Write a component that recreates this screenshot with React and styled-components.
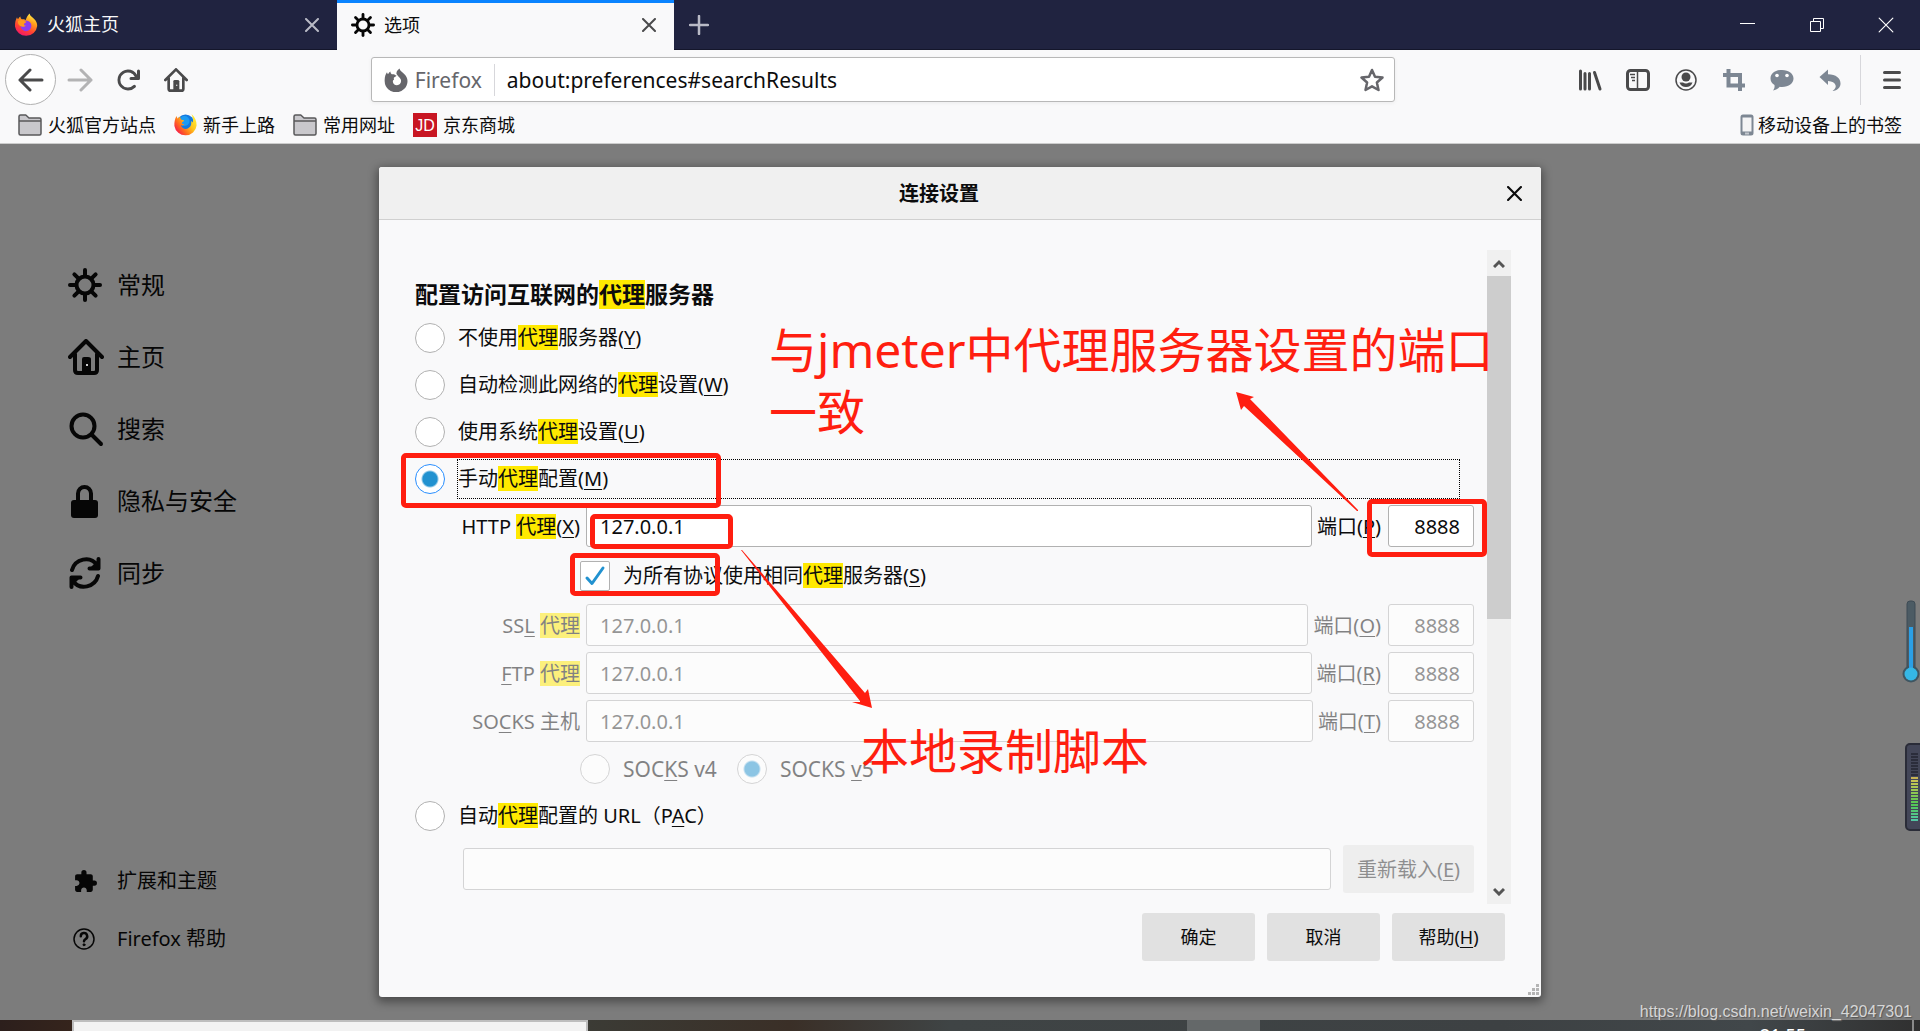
import { useState } from "react";
import styled, { createGlobalStyle, css } from "styled-components";
import { MdExtension } from "react-icons/md";

const GlobalStyle = createGlobalStyle`
  *,
  *::before,
  *::after {
    box-sizing: border-box;
  }

  body {
    margin: 0;
    overflow: hidden;
    font-family: "Noto Sans", "Noto Sans CJK SC", sans-serif;
    font-size: 20px;
    color: #0c0c0d;
  }

  button,
  input {
    margin: 0;
    font: inherit;
    color: inherit;
  }

  button {
    padding: 0;
    border: none;
    background: none;
  }

  a {
    color: inherit;
    text-decoration: none;
  }

  svg {
    display: block;
    flex-shrink: 0;
  }
`;

const Page = styled.div`
  display: flex;
  flex-direction: column;
  height: 100vh;
`;

/* ---------- tab strip ---------- */

const TabStrip = styled.header`
  display: flex;
  height: 50px;
  background: #202340;
  border-bottom: 1px solid #14162b;
  color: #f9f9fa;
`;

const Tab = styled.div`
  display: flex;
  align-items: center;
  gap: 9px;
  width: 337px;
  padding: 0 18px 0 14px;
  height: 49px;
  font-size: 18px;
  line-height: 24px;
  color: #f9f9fa;

  ${({ $active }) =>
    $active &&
    css`
      height: 50px;
      color: #0c0c0d;
      background: #f9f9fa;
      box-shadow: inset 0 3px 0 #0a84ff;
    `}
`;

const TabTitle = styled.span`
  flex: 1;
  padding-bottom: 1px;
`;

const NewTab = styled.button`
  display: grid;
  place-items: center;
  width: 50px;
`;

const WindowButtons = styled.div`
  display: flex;
  margin-left: auto;
`;

const WindowButton = styled.button`
  display: grid;
  place-items: center;
  width: 69px;
`;

/* ---------- toolbars ---------- */

const Toolbar = styled.nav`
  display: flex;
  align-items: center;
  height: 59px;
  padding: 0 4px 0 5px;
  background: #f9f9fa;
  color: #4a4a4b;
`;

const BackButton = styled.button`
  display: grid;
  place-items: center;
  width: 51px;
  height: 51px;
  border: 1px solid #b1b1b1;
  border-radius: 50%;
  background: #fff;
`;

const ToolButton = styled.button`
  display: grid;
  place-items: center;
  width: 48px;
  height: 48px;
  color: ${({ $tone }) => $tone || "inherit"};
`;

const Spacer = styled.div`
  flex: 1 1 4px;
`;

const UrlBar = styled.div`
  display: flex;
  align-items: center;
  flex: 6;
  height: 45px;
  padding: 0 10px 0 12px;
  border: 1px solid #b8b8b8;
  border-radius: 3px;
  background: #fff;
  box-shadow: 0 1px 4px rgba(0, 0, 0, 0.06);
  font-size: 21px;
`;

const Identity = styled.span`
  display: flex;
  align-items: center;
  gap: 7px;
  height: 32px;
  padding-right: 12px;
  border-right: 1px solid #d7d7db;
  color: #66666b;
`;

const UrlInput = styled.input`
  flex: 1;
  min-width: 0;
  padding: 0 12px;
  border: none;
  outline: none;
  background: none;
  color: #0c0c0d;
`;

const Divider = styled.span`
  width: 1px;
  height: 50px;
  margin: 0 7px 0 6px;
  background: #d7d7db;
`;

const Bookmarks = styled.nav`
  display: flex;
  align-items: center;
  gap: 18px;
  height: 35px;
  padding: 0 18px 2px;
  border-bottom: 1px solid #ccc;
  background: #f9f9fa;
  font-size: 18px;
  line-height: 24px;
`;

const Bookmark = styled.a`
  display: flex;
  align-items: center;
  gap: ${({ $last }) => ($last ? "4px" : "6px")};
  margin-left: ${({ $last }) => ($last ? "auto" : "0")};
`;

/* ---------- page body ---------- */

const Main = styled.main`
  position: relative;
  display: grid;
  grid-template: minmax(0, 1fr) / minmax(0, 1fr);
  flex: 1;
  min-height: 0;
  background: #7c7c7c;

  & > aside,
  & > section {
    grid-area: 1 / 1;
  }
`;

const Sidebar = styled.aside`
  display: flex;
  flex-direction: column;
  padding: 105px 0 52px 68px;
  color: #060606;
`;

const Category = styled.a`
  display: grid;
  grid-template-columns: 36px auto;
  align-items: center;
  gap: 13px;
  height: ${({ $small }) => ($small ? "58px" : "72px")};
  font-size: ${({ $small }) => ($small ? "20px" : "24px")};
  line-height: 32px;

  svg {
    justify-self: start;
    margin-left: ${({ $small }) => ($small ? "5px" : "0")};
  }
`;

const SidebarFooter = styled.div`
  margin-top: auto;
`;

/* ---------- dialog ---------- */

const Dialog = styled.section`
  position: relative;
  justify-self: center;
  align-self: start;
  width: 1162px;
  max-width: 100%;
  margin-top: 23px;
  padding-bottom: 36px;
  border-radius: 3px;
  background: #f9f9fa;
  box-shadow: 0 3px 10px 2px rgba(0, 0, 0, 0.4);
`;

const DialogHeader = styled.header`
  display: grid;
  grid-template-columns: 12px 1fr 54px;
  align-items: center;
  height: 53px;
  border-bottom: 1px solid #d0d0d0;
  border-radius: 3px 3px 0 0;
  background: #f0f0f0;
`;

const DialogTitle = styled.h1`
  grid-column: 2;
  margin: 0;
  padding-top: 2px;
  font-size: 20px;
  line-height: 28px;
  text-align: center;
`;

const CloseButton = styled.button`
  display: grid;
  place-items: center;
  height: 40px;
`;

const ScrollBox = styled.div`
  display: flex;
  gap: 13px;
  margin: 30px 30px 0 36px;
`;

const Form = styled.form`
  flex: 1;
  padding: 29px 0 11px;
`;

const Heading = styled.h2`
  margin: 0 0 9px;
  font-size: 23px;
  line-height: 30px;
`;

const Mark = styled.mark`
  display: inline-block;
  background: #ffe900;
  color: inherit;
  line-height: ${({ $large }) => ($large ? "29px" : "25px")};
`;

const Key = styled.u`
  text-decoration-thickness: 1px;
  text-underline-offset: 3px;
`;

const Options = styled.div`
  display: flex;
  flex-direction: column;
  gap: 7px;
`;

const Option = styled.div`
  display: flex;
  align-items: center;
  gap: 12px;
  height: 40px;
  padding-right: 14px;
`;

const OptionLabel = styled.label`
  flex: 1;
  height: 40px;
  border: 1px dotted ${({ $focused }) => ($focused ? "#000" : "transparent")};
  line-height: 38px;
`;

const Radio = styled.input.attrs({ type: "radio" })`
  appearance: none;
  width: 30px;
  height: 30px;
  border: 1px solid #b1b1b1;
  border-radius: 50%;
  background: #fff;

  &:checked {
    border-color: #2a8fff;
    background: radial-gradient(circle, #2292d0 0 7px, #fff 9px);
  }

  &:disabled {
    border-color: #b1b1b1;
    opacity: 0.5;
  }
`;

const Checkbox = styled.input.attrs({ type: "checkbox" })`
  appearance: none;
  width: 30px;
  height: 30px;
  border: 1px solid #b1b1b1;
  border-radius: 2px;
  background: #fff;
`;

const CheckCell = styled.span`
  display: grid;

  & > * {
    grid-area: 1 / 1;
    place-self: center;
  }

  svg {
    pointer-events: none;
  }
`;

const Fields = styled.div`
  display: flex;
  flex-direction: column;
  gap: 6px;
  padding: 6px 0;
`;

const FieldRow = styled.div`
  display: flex;
  align-items: center;
`;

const IndentRow = styled.div`
  display: flex;
  align-items: center;
  gap: 13px;
  height: ${({ $tall }) => ($tall ? "45px" : "42px")};
  padding-left: 165px;
  line-height: 32px;
`;

const FieldLabel = styled.label`
  width: 165px;
  padding-top: 2px;
  text-align: right;
  white-space: nowrap;
  line-height: 32px;
  opacity: ${({ $off }) => ($off ? 0.5 : 1)};
`;

const PortLabel = styled.label`
  margin: 0 7px 0 5px;
  padding-top: 2px;
  line-height: 32px;
  opacity: ${({ $off }) => ($off ? 0.5 : 1)};
`;

const DimLabel = styled.label`
  margin-right: 7px;
  font-size: 21px;
  opacity: 0.5;
`;

const TextInput = styled.input`
  flex: 1;
  min-width: 0;
  height: 42px;
  margin-left: ${({ $flush }) => ($flush ? "0" : "6px")};
  padding: 0 13px;
  border: 1px solid #b1b1b1;
  border-radius: 3px;
  background: #fff;
  outline: none;

  &:disabled {
    opacity: 0.5;
    color: #333;
  }
`;

const PortInput = styled(TextInput)`
  flex: 0 0 86px;
  margin-left: 0;
  text-align: right;
`;

const PacRow = styled.div`
  display: flex;
  align-items: center;
  gap: 12px;
  margin-top: 9px;
  padding-left: 48px;
`;

const Button = styled.button`
  min-width: ${({ $wide }) => ($wide ? "131px" : "113px")};
  height: 48px;
  padding-bottom: 2px;
  border-radius: 3px;
  background: #e1e1e1;
  font-size: ${({ $wide }) => ($wide ? "20px" : "18px")};

  &:disabled {
    opacity: 0.45;
  }
`;

const DialogFooter = styled.footer`
  display: flex;
  justify-content: flex-end;
  gap: 12px;
  margin-top: 9px;
  padding-right: 36px;
`;

const Scrollbar = styled.div`
  display: flex;
  flex-direction: column;
  width: 24px;
  background: #f0f0f0;
`;

const ScrollButton = styled.button`
  display: grid;
  place-items: center;
  height: 26px;
`;

const Thumb = styled.div`
  flex: 343;
  background: #cdcdcd;
`;

const Track = styled.div`
  flex: 259;
`;

const Grip = styled.svg`
  position: absolute;
  right: 2px;
  bottom: 2px;
`;

/* ---------- marks drawn over the dialog ---------- */

const NoteBox = styled.div`
  position: absolute;
  left: ${({ $x }) => $x}px;
  top: ${({ $y }) => $y}px;
  width: ${({ $w }) => $w}px;
  height: ${({ $h }) => $h}px;
  border: 5px solid #ff1e10;
  border-radius: 5px;
  pointer-events: none;
`;

const NoteText = styled.p`
  position: absolute;
  left: ${({ $x }) => $x}px;
  top: ${({ $y }) => $y}px;
  margin: 0;
  color: #ff1e10;
  font-size: 48px;
  line-height: 62px;
  white-space: pre;
  pointer-events: none;
`;

const Arrows = styled.svg`
  position: absolute;
  left: 0;
  top: 0;
  pointer-events: none;
`;

const Gadget = styled.svg`
  position: absolute;
  right: 0;
  top: ${({ $y }) => $y}px;
`;

const Watermark = styled.span`
  position: absolute;
  right: 8px;
  bottom: 0;
  color: #d6d6d6;
  font-family: "Liberation Sans", Arial, sans-serif;
  font-size: 16px;
  line-height: 16px;
  text-shadow: 1px 1px 1px #555;
`;

/* ---------- taskbar ---------- */

const Taskbar = styled.footer`
  display: flex;
  height: 11px;
  overflow: hidden;
  background: linear-gradient(
    90deg,
    #2c1f1c 0,
    #35241c 72px,
    #3b3b35 588px,
    #3a2f27 790px,
    #3f4445 950px,
    #3d4143 1500px,
    #41474a 1750px,
    #303030 100%
  );
`;

const TaskSearch = styled.div`
  flex: 0 0 516px;
  margin-left: 72px;
  border: 2px solid #bdbdbd;
  border-bottom: none;
  background: #f2f2f2;
`;

const TaskItem = styled.div`
  width: 73px;
  margin-left: 599px;
  background: #646869;
`;

const Clock = styled.time`
  margin-left: auto;
  padding-top: 3px;
  color: #fff;
  font-size: 18px;
  line-height: 24px;
`;

const ShowDesktop = styled.span`
  width: 8px;
  margin-left: 106px;
  border-left: 2px solid #8a8a8a;
`;

/* ---------- icons ---------- */

const FirefoxLogo = () => (
  <svg width="24" height="24" viewBox="0 0 24 24">
    <defs>
      <linearGradient id="foxFlame" x1="0.8" y1="0" x2="0.3" y2="1">
        <stop offset="0" stopColor="#fff44f" />
        <stop offset="0.35" stopColor="#ffa11b" />
        <stop offset="0.7" stopColor="#ff4033" />
        <stop offset="1" stopColor="#f5156c" />
      </linearGradient>
    </defs>
    <path
      fill="url(#foxFlame)"
      d="M15.500 0.500c.4 2.400 3.200 4 4.700 5.500 2 2 3 4.400 3 7A11.200 11 0 0 1 1 13.500C.7 9.500 2 6 3 4.200c.3 1 .6 1.500 1 2C4.800 5 5.500 4 6.400 3.500c.1 1.300.6 2.200 1.400 2.800 1.700-.3 3.200.2 3.900.9.8-2.700 2-4.800 3.800-6.700z"
    />
    <circle cx="12" cy="12.800" r="5.400" fill="#8b3df0" />
    <path
      fill="#ff9a1f"
      d="M4 8c2.200-1.500 4.500-1.300 6.500 0l2 .7c-.5 1.300-2.400 1.500-2.600 2.400.2 1.600 1 1.500 2 1.700-1.200 1.200-3 1.200-4.300.7C5 12.500 3.500 11 4 8z"
    />
  </svg>
);

const FirefoxClassic = () => (
  <svg width="23" height="24" viewBox="0 0 23 24">
    <defs>
      <linearGradient id="foxTail" x1="1" y1="0.2" x2="0.1" y2="0.9">
        <stop offset="0" stopColor="#fff13a" />
        <stop offset="0.4" stopColor="#ffc21a" />
        <stop offset="0.7" stopColor="#ff6a1f" />
        <stop offset="1" stopColor="#f5134f" />
      </linearGradient>
    </defs>
    <circle cx="11.500" cy="10.500" r="9" fill="#1479e0" />
    <circle cx="10.500" cy="8" r="5" fill="#1c9bf2" />
    <path
      fill="url(#foxTail)"
      d="M17.500 1c3.500 3 5.200 7 5.100 11.500A11.200 11 0 0 1 .4 13C.2 9 .8 6 2.500 3l1 2.500L6.200 3.500c0 1.500.5 2.500 1.300 3.300 1 .3 2 .3 2.600.7-.3 1.200-2 1.500-2.300 2.500 0 1.200 1.700 1.200 2.600 1.400-1.200 1.200-2.500 1.100-3.600.9 1.200 3.500 5 4.600 7.700 2.800 2.600-1.700 3.300-4.500 2.500-7.100l1.800 1.500C19.500 6.500 18.500 3.500 17.500 1z"
    />
  </svg>
);

const FirefoxMono = () => (
  <svg width="24" height="24" viewBox="0 0 24 24" fill="#66666b">
    <path d="M15.500 0.500c.4 2.400 3.200 4 4.700 5.500 2 2 3.300 4.400 3.300 7A11.400 11 0 0 1 .7 13.500C.4 9.500 1.500 6 3 4.200c.3 1 .6 1.500 1 2C4.800 5 5.500 4 6.400 3.500c.1 1.300.6 2.200 1.400 2.800 1.700-.3 3 .2 3.700.9l1 .4c-.4 1.200-2 1.500-2.800 2.400.3 1.300.8 1.200-.7 2.500-.7 2.700 1.500 4.900 4 4.800 3-.2 4.800-3 3.800-5.800-.8-2.200-3.500-3.600-4.300-5.500-.5-2.500 1.400-4.200 3-5.500z" />
  </svg>
);

const Gear = ({ size }) => (
  <svg width={size} height={size} viewBox="0 0 34 34" fill="none" stroke="#060606" strokeLinecap="round">
    <circle cx="17" cy="17" r="8.500" strokeWidth="4" />
    {[0, 45, 90, 135, 180, 225, 270, 315].map((deg) => (
      <path key={deg} d="M17 7V2" strokeWidth="4" transform={`rotate(${deg} 17 17)`} />
    ))}
  </svg>
);

const House = ({ size, color }) => (
  <svg width={size} height={size} viewBox="0 0 36 36" fill="none" stroke={color} strokeWidth="4" strokeLinecap="round" strokeLinejoin="round">
    <path d="M2 18 18 2l16 16M7 15v16q0 3 3 3h16q3 0 3-3V15" />
    <path fill={color} stroke="none" d="M14 20q0-2 2-2h4q3 0 3 2v14h-9z" />
    <rect x="18" y="25" width="2" height="2" fill="#ccc" stroke="none" />
  </svg>
);

const Cross = ({ size, color, width = 2 }) => (
  <svg width={size} height={size} viewBox="0 0 14 14" stroke={color} strokeWidth={width} strokeLinecap="round">
    <path d="M1 1l12 12M13 1L1 13" />
  </svg>
);

const Arrow = ({ flip, color }) => (
  <svg width="26" height="24" viewBox="0 0 26 24" fill="none" stroke={color} strokeWidth="3" strokeLinecap="round" strokeLinejoin="round">
    <path d={flip ? "M2 12h22M14 2l10 10-10 10" : "M24 12H2M12 2 2 12l10 10"} />
  </svg>
);

const Folder = () => (
  <svg width="24" height="22" viewBox="0 0 24 22" fill="#c9c8cc" stroke="#58585a" strokeWidth="1.500" strokeLinejoin="round">
    <path d="M1 2.500Q1 1 2.500 1h5.300L11 4h10.500Q23 4 23 5.500v14q0 1.500-1.500 1.500h-19Q1 21 1 19.500z" />
    <path d="M1 7h22" />
  </svg>
);

const JdLogo = () => (
  <svg width="24" height="24" viewBox="0 0 24 24">
    <rect width="24" height="24" fill="#c81623" />
    <text x="12" y="18" fill="#fff" fontSize="16" fontFamily="Liberation Sans, sans-serif" textAnchor="middle">
      JD
    </text>
  </svg>
);

const categories = [
  { label: "常规", icon: <Gear size={34} /> },
  { label: "主页", icon: <House size={36} color="#060606" /> },
  {
    label: "搜索",
    icon: (
      <svg width="36" height="36" viewBox="0 0 36 36" fill="none" stroke="#060606" strokeWidth="4" strokeLinecap="round">
        <circle cx="15" cy="15" r="11.500" />
        <path d="M24 24l9 9" />
      </svg>
    ),
  },
  {
    label: "隐私与安全",
    icon: (
      <svg width="34" height="34" viewBox="0 0 34 34">
        <path d="M10 17V9.500a6.500 6.500 0 0 1 13 0V17" fill="none" stroke="#060606" strokeWidth="4" />
        <rect x="3" y="16" width="27" height="18" rx="3" fill="#060606" />
      </svg>
    ),
  },
  {
    label: "同步",
    icon: (
      <svg width="34" height="34" viewBox="0 0 34 34" fill="none" stroke="#060606" strokeWidth="4" strokeLinecap="round" strokeLinejoin="round">
        <path d="M4 14C7 3 22-1 29 9" />
        <path d="M30.500 3v9.500H21.500" />
        <path d="M30 20C27 31 12 35 5 25" />
        <path d="M3.500 31v-9.500h9" />
        <path fill="#060606" stroke="none" d="M22 12h8V4zM12 22H4v8z" />
      </svg>
    ),
  },
];

const proxyWord = <Mark>代理</Mark>;

const options = [
  { id: "none", label: <>不使用{proxyWord}服务器(<Key>Y</Key>)</> },
  { id: "detect", label: <>自动检测此网络的{proxyWord}设置(<Key>W</Key>)</> },
  { id: "system", label: <>使用系统{proxyWord}设置(<Key>U</Key>)</> },
  { id: "manual", label: <>手动{proxyWord}配置(<Key>M</Key>)</> },
];

const sameProxies = [
  { id: "ssl", label: <>SS<Key>L</Key> {proxyWord}</>, port: "O" },
  { id: "ftp", label: <><Key>F</Key>TP {proxyWord}</>, port: "R" },
  { id: "socks", label: <>SO<Key>C</Key>KS 主机</>, port: "T" },
];

const ProxyRow = ({ id, label, port, disabled }) => (
  <FieldRow>
    <FieldLabel htmlFor={id} $off={disabled}>
      {label}
    </FieldLabel>
    <TextInput id={id} defaultValue="127.0.0.1" disabled={disabled} />
    <PortLabel htmlFor={`${id}-port`} $off={disabled}>
      端口(<Key>{port}</Key>)
    </PortLabel>
    <PortInput id={`${id}-port`} defaultValue="8888" disabled={disabled} />
  </FieldRow>
);

const BrowserChrome = () => (
  <>
    <TabStrip>
      <Tab>
        <FirefoxLogo />
        <TabTitle>火狐主页</TabTitle>
        <button aria-label="关闭标签页">
          <Cross size={14} color="#b9bac6" />
        </button>
      </Tab>
      <Tab $active>
        <Gear size={24} />
        <TabTitle>选项</TabTitle>
        <button aria-label="关闭标签页">
          <Cross size={14} color="#4a4a4b" />
        </button>
      </Tab>
      <NewTab aria-label="新建标签页">
        <svg width="20" height="20" viewBox="0 0 20 20" stroke="#b9bac6" strokeWidth="2.500" strokeLinecap="round">
          <path d="M10 1v18M1 10h18" />
        </svg>
      </NewTab>
      <WindowButtons>
        <WindowButton aria-label="最小化">
          <svg width="15" height="15" viewBox="0 0 15 15" fill="#fff">
            <rect y="6" width="15" height="1" />
          </svg>
        </WindowButton>
        <WindowButton aria-label="还原">
          <svg width="14" height="14" viewBox="0 0 14 14" fill="none" stroke="#fff">
            <path d="M.5 3.500h10v10H.5zM3.500 3V.5h10v10H11" />
          </svg>
        </WindowButton>
        <WindowButton aria-label="关闭">
          <Cross size={16} color="#fff" width={1} />
        </WindowButton>
      </WindowButtons>
    </TabStrip>

    <Toolbar>
      <BackButton aria-label="后退">
        <Arrow color="#4a4a4b" />
      </BackButton>
      <ToolButton aria-label="前进">
        <Arrow flip color="#b3b3b4" />
      </ToolButton>
      <ToolButton aria-label="刷新">
        <svg width="24" height="24" viewBox="0 0 16 16" fill="currentColor">
          <path d="M15 1a1 1 0 0 0-1 1v2.418A6.995 6.995 0 1 0 8 15a6.954 6.954 0 0 0 4.950-2.050 1 1 0 0 0-1.414-1.414A5.019 5.019 0 1 1 12.549 6H10a1 1 0 0 0 0 2h5a1 1 0 0 0 1-1V2a1 1 0 0 0-1-1z" />
        </svg>
      </ToolButton>
      <ToolButton aria-label="主页">
        <House size={24} color="#4a4a4b" />
      </ToolButton>
      <Spacer />
      <UrlBar>
        <Identity>
          <FirefoxMono />
          Firefox
        </Identity>
        <UrlInput aria-label="地址" defaultValue="about:preferences#searchResults" />
        <svg width="24" height="24" viewBox="0 0 24 24" fill="none" stroke="#66666b" strokeWidth="2.500" strokeLinejoin="round">
          <path d="M12 2l3 6.700 7.500.8-5.600 5 1.600 7.500L12 18.300 5.500 22l1.600-7.500-5.600-5L9 8.700z" />
        </svg>
      </UrlBar>
      <Spacer />
      <ToolButton aria-label="书签库">
        <svg width="24" height="22" viewBox="0 0 24 22" stroke="currentColor" strokeWidth="3" strokeLinecap="round">
          <path d="M2.500 2v18M7 4.500V20M11.500 4.500V20M16.500 3.500l5.500 16.500" />
        </svg>
      </ToolButton>
      <ToolButton aria-label="侧栏">
        <svg width="24" height="22" viewBox="0 0 24 22" fill="none" stroke="currentColor" strokeWidth="3">
          <rect x="1.500" y="1.500" width="21" height="19" rx="3" />
          <path d="M11.500 1v20" strokeWidth="1.500" />
          <path d="M4 5.500h5M5 8.500h4M6 11.500h3" strokeWidth="1.500" />
        </svg>
      </ToolButton>
      <ToolButton aria-label="账户">
        <svg width="22" height="22" viewBox="0 0 22 22" fill="currentColor">
          <circle cx="11" cy="11" r="10" fill="none" stroke="currentColor" strokeWidth="1.500" />
          <circle cx="11" cy="8" r="4.500" />
          <path d="M4.500 13.500q2 .2 3.500 0 3 1.800 6 0 1.500.2 3.500 0c-1 3-3.500 4.500-6.500 4.500s-5.500-1.500-6.500-4.500z" />
        </svg>
      </ToolButton>
      <ToolButton aria-label="截图" $tone="#7d8793">
        <svg width="22" height="22" viewBox="0 0 22 22" fill="none" stroke="currentColor" strokeWidth="4">
          <path d="M0 6h17v16M5.500 0v16.500H22" />
        </svg>
      </ToolButton>
      <ToolButton aria-label="消息" $tone="#7d8793">
        <svg width="24" height="22" viewBox="0 0 24 22" fill="currentColor">
          <path d="M12 1c7 0 11.500 3.700 11.500 8.500S19 18 12 18c-1 0-1.500 0-2.300-.2C8 20 5.500 21 3 21.500c1.300-1.500 1.800-3 1.500-5.500C2 14.500.5 12.300.5 9.500.5 4.700 5 1 12 1z" />
          <circle cx="7" cy="6.500" r="1.800" fill="#fff" />
          <circle cx="17" cy="6.500" r="1.800" fill="#fff" />
        </svg>
      </ToolButton>
      <ToolButton aria-label="撤销" $tone="#7d8793">
        <svg width="22" height="22" viewBox="0 0 22 22" fill="currentColor">
          <path d="M.5 8 9 .5v4.800c8 0 12.500 4 12.500 9.200 0 4-3 7-8 7.500 5.500-3.500 4-9.500-4.500-10v4z" />
        </svg>
      </ToolButton>
      <Divider />
      <ToolButton aria-label="菜单">
        <svg width="20" height="20" viewBox="0 0 20 20" stroke="currentColor" strokeWidth="3" strokeLinecap="round">
          <path d="M2.500 2.500h15M2.500 10h15M2.500 17.500h15" />
        </svg>
      </ToolButton>
    </Toolbar>

    <Bookmarks>
      <Bookmark href="#sites">
        <Folder />
        火狐官方站点
      </Bookmark>
      <Bookmark href="#start">
        <FirefoxClassic />
        新手上路
      </Bookmark>
      <Bookmark href="#common">
        <Folder />
        常用网址
      </Bookmark>
      <Bookmark href="#jd">
        <JdLogo />
        京东商城
      </Bookmark>
      <Bookmark href="#mobile" $last>
        <svg width="14" height="22" viewBox="0 0 14 22">
          <rect x=".5" y=".5" width="13" height="21" rx="2.500" fill="#7d8793" />
          <rect x="2.500" y="3.500" width="9" height="14" fill="#f4f4f5" />
          <rect x="5" y="18.500" width="4" height="2" fill="#c3c8ce" />
        </svg>
        移动设备上的书签
      </Bookmark>
    </Bookmarks>
  </>
);

const ConnectionDialog = () => {
  const [mode, setMode] = useState("manual");
  const [shared, setShared] = useState(true);

  return (
    <Dialog role="dialog" aria-labelledby="dialog-title">
      <DialogHeader>
        <DialogTitle id="dialog-title">连接设置</DialogTitle>
        <CloseButton aria-label="关闭">
          <Cross size={15} color="#0c0c0d" />
        </CloseButton>
      </DialogHeader>

      <ScrollBox>
        <Form>
          <Heading>
            配置访问互联网的<Mark $large>代理</Mark>服务器
          </Heading>
          <Options>
            {options.map((item) => (
              <Option key={item.id}>
                <Radio id={item.id} name="mode" checked={mode === item.id} onChange={() => setMode(item.id)} />
                <OptionLabel htmlFor={item.id} $focused={mode === item.id}>
                  {item.label}
                </OptionLabel>
              </Option>
            ))}
          </Options>

          <Fields>
            <ProxyRow id="http" label={<>HTTP {proxyWord}(<Key>X</Key>)</>} port="P" />
            <IndentRow $tall>
              <CheckCell>
                <Checkbox id="shared" checked={shared} onChange={() => setShared(!shared)} />
                {shared && (
                  <svg width="22" height="22" viewBox="0 0 22 22" fill="none" stroke="#2292d0" strokeWidth="3" strokeLinecap="round" strokeLinejoin="round">
                    <path d="M3 13l5 5.500L19 3" />
                  </svg>
                )}
              </CheckCell>
              <label htmlFor="shared">
                为所有协议使用相同{proxyWord}服务器(<Key>S</Key>)
              </label>
            </IndentRow>
            {sameProxies.map((item) => (
              <ProxyRow key={item.id} {...item} disabled={shared} />
            ))}
            <IndentRow>
              <Radio id="v4" name="socks-version" disabled />
              <DimLabel htmlFor="v4">
                SOC<Key>K</Key>S v4
              </DimLabel>
              <Radio id="v5" name="socks-version" defaultChecked disabled />
              <DimLabel htmlFor="v5">
                SOCKS <Key>v</Key>5
              </DimLabel>
            </IndentRow>
          </Fields>

          <Option>
            <Radio id="pac" name="mode" checked={mode === "pac"} onChange={() => setMode("pac")} />
            <OptionLabel htmlFor="pac" $focused={mode === "pac"}>
              自动{proxyWord}配置的 URL（P<Key>A</Key>C）
            </OptionLabel>
          </Option>
          <PacRow>
            <TextInput aria-label="自动代理配置的 URL" disabled $flush />
            <Button type="button" $wide disabled>
              重新载入(<Key>E</Key>)
            </Button>
          </PacRow>
        </Form>

        <Scrollbar>
          <ScrollButton aria-label="向上滚动">
            <svg width="12" height="10" viewBox="0 0 12 10" fill="none" stroke="#555" strokeWidth="3">
              <path d="M1 9l5-5 5 5" />
            </svg>
          </ScrollButton>
          <Thumb />
          <Track />
          <ScrollButton aria-label="向下滚动">
            <svg width="12" height="10" viewBox="0 0 12 10" fill="none" stroke="#555" strokeWidth="3">
              <path d="M1 3l5 5 5-5" />
            </svg>
          </ScrollButton>
        </Scrollbar>
      </ScrollBox>

      <DialogFooter>
        <Button>确定</Button>
        <Button>取消</Button>
        <Button>
          帮助(<Key>H</Key>)
        </Button>
      </DialogFooter>

      <Grip width="11" height="11" viewBox="0 0 11 11" fill="#b5b5b5">
        <path d="M8 0h3v3H8zM4 4h3v3H4zM8 4h3v3H8zM0 8h3v3H0zM4 8h3v3H4zM8 8h3v3H8z" />
      </Grip>

      <NoteBox $x={22} $y={286} $w={320} $h={55} />
      <NoteBox $x={211} $y={347} $w={143} $h={35} />
      <NoteBox $x={191} $y={386} $w={150} $h={43} />
      <NoteBox $x={988} $y={332} $w={120} $h={58} />
      <NoteText $x={390} $y={152}>{"与jmeter中代理服务器设置的端口\n一致"}</NoteText>
      <NoteText $x={482} $y={553}>本地录制脚本</NoteText>
      <Arrows width="1162" height="830" viewBox="0 0 1162 830" fill="#ff1e10">
        <path d="M857 225l18 5-4 2L979 343v1h-1L865 239l-3 4z" />
        <path d="M493 541l-4-19-3 4L363 383l-1 0 119 151v1l-8 0z" />
      </Arrows>
    </Dialog>
  );
};

const meterBars = Array.from({ length: 23 }, (_, i) => i);

const barColor = (i) => (i < 8 ? "#2b2d3b" : `hsl(${50 + (i - 8) * 8} 50% 55%)`);

const App = () => (
  <Page>
    <GlobalStyle />
    <BrowserChrome />

    <Main>
      <Sidebar>
        {categories.map((item) => (
          <Category key={item.label} href="#category">
            {item.icon}
            {item.label}
          </Category>
        ))}
        <SidebarFooter>
          <Category href="#addons" $small>
            <MdExtension size={25} />
            扩展和主题
          </Category>
          <Category href="#help" $small>
            <svg width="22" height="22" viewBox="0 0 22 22" fill="none" stroke="#060606" strokeLinecap="round">
              <circle cx="11" cy="11" r="10" strokeWidth="1.500" />
              <path d="M7.800 8.200a3.200 3.200 0 1 1 4.700 2.900q-1.500.8-1.500 2.200" strokeWidth="2.500" />
              <circle cx="11" cy="16.800" r="1" strokeWidth="1" fill="#060606" />
            </svg>
            Firefox 帮助
          </Category>
        </SidebarFooter>
      </Sidebar>

      <ConnectionDialog />

      <Gadget $y={456} width="18" height="84" viewBox="0 0 18 84">
        <rect x="5" y="1" width="8" height="72" rx="3" fill="#4c5b64" stroke="#3d4b54" />
        <circle cx="9" cy="74" r="8.500" fill="#3f5561" />
        <rect x="7" y="27" width="4" height="46" fill="#2b9fe6" />
        <circle cx="9" cy="74" r="6.500" fill="#35b7e6" />
      </Gadget>
      <Gadget $y={599} width="15" height="88" viewBox="0 0 15 88">
        <rect x="1" y="1" width="24" height="86" rx="4" fill="#434658" stroke="#2a2c38" strokeWidth="2" />
        {meterBars.map((i) => (
          <rect key={i} x="6" y={10 + i * 3} width="7" height="2" fill={barColor(i)} />
        ))}
      </Gadget>
      <Watermark>https://blog.csdn.net/weixin_42047301</Watermark>
    </Main>

    <Taskbar>
      <TaskSearch />
      <TaskItem />
      <Clock>21:55</Clock>
      <ShowDesktop />
    </Taskbar>
  </Page>
);

export default App;
